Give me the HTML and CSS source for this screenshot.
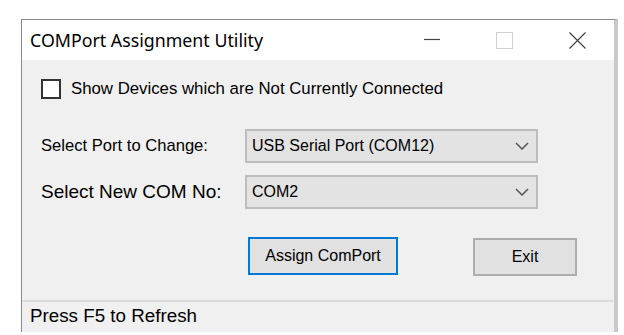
FILE: index.html
```html
<!DOCTYPE html>
<html lang="en">
<head>
    <meta charset="UTF-8">
    <title>COMPort Assignment Utility</title>
    <link rel="stylesheet" href="styles.css">
</head>
<body>
    <div class="window">
        <div class="titlebar">
            <div class="title">COMPort Assignment Utility</div>
            <div class="caption-btn">
                <svg width="16" height="16" viewBox="0 0 16 16"><line x1="0" y1="7.5" x2="16" y2="7.5" stroke="#444" stroke-width="1.2"/></svg>
            </div>
            <div class="caption-btn">
                <svg width="17" height="17" viewBox="0 0 17 17"><rect x="0.5" y="0.5" width="16" height="16" fill="none" stroke="#cfcfcf" stroke-width="1"/></svg>
            </div>
            <div class="caption-btn">
                <svg width="17" height="17" viewBox="0 0 17 17"><path d="M0.5 0.5 L16.5 16.5 M16.5 0.5 L0.5 16.5" stroke="#444" stroke-width="1.2" fill="none"/></svg>
            </div>
        </div>

        <div class="client">
            <label class="check-row">
                <span class="checkbox"></span>
                <span class="check-text">Show Devices which are Not Currently Connected</span>
            </label>

            <div class="form">
                <div class="form-row">
                    <div class="label">Select Port to Change:</div>
                    <div class="combo">
                        <span>USB Serial Port (COM12)</span>
                        <svg width="14" height="8" viewBox="0 0 14 8"><path d="M1 1 L7 7 L13 1" stroke="#555" stroke-width="1.5" fill="none"/></svg>
                    </div>
                </div>
                <div class="form-row">
                    <div class="label label-big">Select New COM No:</div>
                    <div class="combo">
                        <span>COM2</span>
                        <svg width="14" height="8" viewBox="0 0 14 8"><path d="M1 1 L7 7 L13 1" stroke="#555" stroke-width="1.5" fill="none"/></svg>
                    </div>
                </div>
            </div>

            <div class="buttons">
                <button class="btn btn-default">Assign ComPort</button>
                <button class="btn btn-exit">Exit</button>
            </div>

            <div class="status">Press F5 to Refresh</div>
        </div>
    </div>
</body>
</html>
```

FILE: styles.css
```css
body {
    margin: 0;
    background-color: #fff;
    font-family: "Liberation Sans", Arial, sans-serif;
    font-size: 16px;
    color: #000;
    overflow: hidden;
}
.window {
    margin: 19px 0 0 21px;
    width: 597px;
    height: 313px;
    box-sizing: border-box;
    border: 1px solid #8a8a8a;
    border-right: 4px solid #c9c9c9;
    border-bottom: 0;
    display: flex;
    flex-direction: column;
    background-color: #fff;
}
.titlebar {
    height: 40px;
    display: flex;
    align-items: center;
    background-color: #fff;
}
.title {
    flex: 1;
    padding-left: 8px;
    font-family: "Noto Sans", "Open Sans", sans-serif;
    font-size: 17.8px;
    color: #000;
}
.caption-btn {
    width: 73px;
    height: 40px;
    display: flex;
    align-items: center;
    justify-content: center;
}
.client {
    flex: 1;
    background-color: #f0f0f0;
    display: flex;
    flex-direction: column;
}
.check-row {
    display: flex;
    align-items: center;
    gap: 10px;
    margin: 19px 0 0 19px;
}
.check-text {
    font-size: 16.8px;
}
.checkbox {
    width: 20px;
    height: 20px;
    box-sizing: border-box;
    border: 2px solid #333;
    background-color: #fff;
}
.form {
    margin: 30px 0 0 19px;
    display: flex;
    flex-direction: column;
    gap: 12px;
}
.form-row {
    display: flex;
    align-items: center;
}
.label {
    width: 204px;
    font-size: 16.6px;
}
.label-big {
    font-size: 19px;
}
.combo {
    width: 293px;
    height: 34px;
    box-sizing: border-box;
    border: 2px solid #bdbdbd;
    background-color: #e3e3e3;
    display: flex;
    align-items: center;
    justify-content: space-between;
    padding: 0 7px 0 5px;
}
.buttons {
    margin: 28px 0 0 226px;
    display: flex;
    gap: 75px;
}
.btn {
    font-family: "Liberation Sans", Arial, sans-serif;
    font-size: 16px;
    color: #000;
    background-color: #e1e1e1;
    border: 2px solid #adadad;
    height: 38px;
    padding: 0;
}
.btn-default {
    width: 150px;
    border-color: #0078d7;
}
.btn-exit {
    width: 104px;
    margin-top: 1px;
}
.status {
    margin-top: 24px;
    border-top: 2px solid #dcdcdc;
    margin-right: 1px;
    padding: 3px 0 0 8px;
    font-size: 18.8px;
}
```
